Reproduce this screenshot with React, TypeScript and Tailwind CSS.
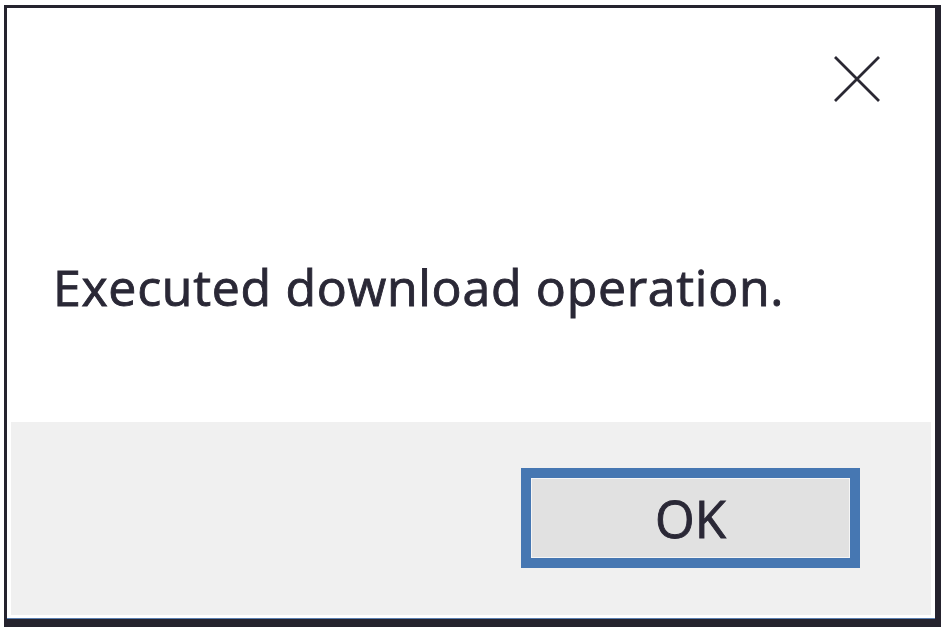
export default function App() {
  return (
    <div
      className="w-[945px] h-[631px] bg-white pt-[5px] pl-[4px]"
      style={{ fontFamily: '"Open Sans", "Noto Sans", sans-serif' }}
    >
      <div className="w-[937px] h-[622px] flex flex-col bg-white border-l-[3px] border-t-[3px] border-r-[6px] border-b-[8px] border-[#25232e] shadow-[inset_0_-1px_0_#5a7fb0]">
        <div className="flex-1 flex flex-col">
          <div className="flex justify-end pt-[47px] pr-[54px]">
            <svg width="48" height="48" viewBox="0 0 48 48" className="text-[#2a2833]">
              <path d="M2 2 L46 46 M46 2 L2 46" stroke="currentColor" strokeWidth="2.8" fill="none" />
            </svg>
          </div>
          <p className="mt-[159px] pl-[46px] text-[50px] leading-none text-[#2a2836] tracking-[0.7px] [-webkit-text-stroke:0.9px_#2a2836]">
            Executed download operation.
          </p>
        </div>
        <div className="px-[4px] pb-[4px]">
          <div className="h-[193px] bg-[#f0f0f0] flex justify-end items-start pt-[46px] pr-[71px]">
            <button className="w-[339px] h-[100px] border-[10px] border-[#4677b2] bg-[#e1e1e1] shadow-[inset_0_0_0_1px_#f5f5f5] flex items-center justify-center text-[51px] leading-none text-[#2a2836] [-webkit-text-stroke:0.9px_#2a2836]">
              OK
            </button>
          </div>
        </div>
      </div>
    </div>
  );
}
